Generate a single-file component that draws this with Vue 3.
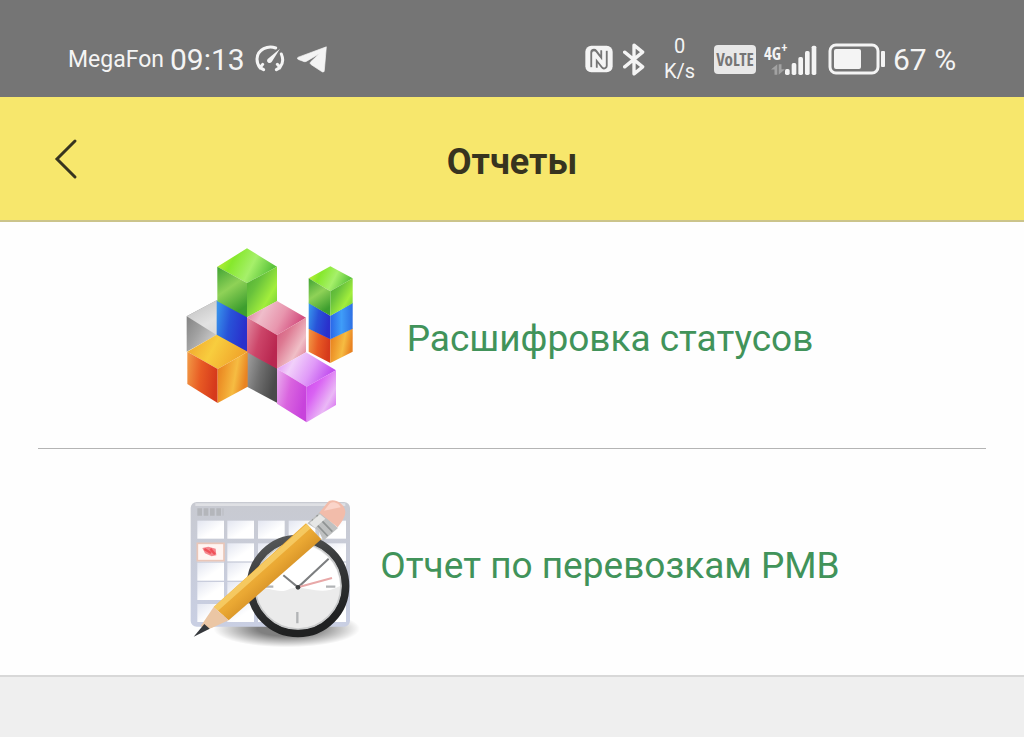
<template>
  <div class="screen">
    <!-- Status bar -->
    <div class="status-bar">
      <div class="status-left">
        <span class="carrier">MegaFon</span>
        <span class="clock">09:13</span>
        <svg class="icon-gauge" viewBox="0 0 90 84" aria-hidden="true">
          <g fill="none" stroke="#f4f4f4" stroke-width="9" stroke-linecap="round">
            <path d="M62 9C40 0 7 12 6 42c0 11 3 19 9 26l8-10" />
            <path d="M79 27c6 14 5 29-4 40l-8-9" />
            <path d="M19 70l7 4M71 70l-7 4" />
          </g>
          <path d="M75 11L38 42c-6 8 5 17 12 9z" fill="#f4f4f4" />
        </svg>
        <svg class="icon-plane" viewBox="0 0 90 80" aria-hidden="true">
          <path d="M88 2L82 72c0 6-4 7-8 4L42 55c-4-3-3-6 0-9l25-23-38 22c-4 2-7 2-11 0L4 40c-4-2-4-5 0-7z" fill="#f4f4f4" stroke="#f4f4f4" stroke-linejoin="round" stroke-width="2" />
        </svg>
      </div>
      <div class="status-right">
        <svg class="icon-nfc" viewBox="0 0 90 84" aria-hidden="true">
          <rect x="1" y="2" width="82" height="80" rx="18" fill="#f4f4f4" />
          <g fill="none" stroke-linejoin="round">
            <path d="M27 68V22l30 40V16" stroke="#757575" stroke-width="22" />
            <path d="M27 76V24l30 38V8" stroke="#f4f4f4" stroke-width="11" />
          </g>
          <path d="M14 67h18l-4 13H14zM52 17h18V4H56z" fill="#f4f4f4" />
        </svg>
        <svg class="icon-bt" viewBox="0 0 66 98" aria-hidden="true">
          <path d="M5 27l54 44-26 21V6l26 21L5 71" fill="none" stroke="#f4f4f4" stroke-width="10" stroke-linejoin="round" stroke-linecap="round" />
        </svg>
        <div class="net-speed">
          <span>0</span>
          <span>K/s</span>
        </div>
        <span class="volte">VoLTE</span>
        <div class="signal">
          <div class="signal-type">
            <span>4G<sup>+</sup></span>
            <svg class="icon-data" viewBox="0 0 40 30" aria-hidden="true">
              <path d="M18 30h-8V15H0L18 0zM22 0h8v14h10L22 30z" fill="#a2a2a2" />
            </svg>
          </div>
          <svg class="icon-bars" viewBox="0 0 96 90" aria-hidden="true">
            <rect
              v-for="(h, i) in bars"
              :key="i"
              :x="i * 20"
              :y="90 - h"
              width="14"
              :height="h"
              rx="5"
              fill="#f4f4f4"
            />
          </svg>
        </div>
        <svg class="icon-battery" viewBox="0 0 60 32" aria-hidden="true">
          <rect x="5" y="2" width="48" height="28" rx="6" fill="none" stroke="#f4f4f4" stroke-width="3" />
          <rect x="9" y="6" width="27" height="20" rx="2" fill="#f4f4f4" />
          <rect x="56" y="8" width="4" height="16" rx="1" fill="#f4f4f4" />
        </svg>
        <span class="clock charge">67 %</span>
      </div>
    </div>

    <!-- Header -->
    <header class="header">
      <button class="back-btn" type="button" aria-label="Назад">
        <svg viewBox="0 0 24 42" aria-hidden="true">
          <path d="M21 3L3 21l18 18" fill="none" stroke="#37341f" stroke-width="3" stroke-linecap="round" />
        </svg>
      </button>
      <h1 class="title">Отчеты</h1>
    </header>

    <!-- Reports -->
    <main class="report-list">
      <a class="report" href="#statuses">
        <svg class="report-icon" viewBox="42 36 528 528" aria-hidden="true">
          <defs>
            <linearGradient v-for="g in gradients" :id="g.id" :key="g.id" :x2="g.x2" :y2="g.y2">
              <stop v-for="(c, i) in g.colors" :key="i" :offset="i / (g.colors.length - 1)" :stop-color="c" />
            </linearGradient>
          </defs>
          <polygon v-for="(face, i) in faces" :key="i" :points="face.points" :fill="'url(#' + face.fill + ')'" />
        </svg>
        <span class="report-name">Расшифровка статусов</span>
      </a>
      <a class="report" href="#rmv">
        <svg class="report-icon" viewBox="42 -18 528 528" aria-hidden="true">
          <defs>
            <linearGradient id="cell" x2="1" y2="1">
              <stop offset="0" stop-color="#e3e6f1" />
              <stop offset="0.6" stop-color="#fff" />
            </linearGradient>
            <linearGradient id="frame" x2="0" y2="1">
              <stop offset="0" stop-color="#c8cad1" />
              <stop offset="1" stop-color="#c9cfe3" />
            </linearGradient>
            <linearGradient id="wood" x2="1" y2="1">
              <stop offset="0.3" stop-color="#f4c04d" />
              <stop offset="0.5" stop-color="#eaa833" />
              <stop offset="0.7" stop-color="#c47e1c" />
            </linearGradient>
            <linearGradient id="rim" x2="0.3" y2="1">
              <stop offset="0" stop-color="#5b5d5e" />
              <stop offset="0.4" stop-color="#3a3c3d" />
              <stop offset="1" stop-color="#202122" />
            </linearGradient>
            <radialGradient id="shade">
              <stop offset="0.4" stop-color="#000" stop-opacity="0.5" />
              <stop offset="1" stop-color="#000" stop-opacity="0" />
            </radialGradient>
          </defs>
          <ellipse cx="350" cy="446" rx="220" ry="56" fill="url(#shade)" />
          <rect x="62" y="66" width="478" height="374" rx="18" fill="url(#frame)" />
          <path d="M76 74h450" stroke="#dfe0e4" stroke-width="8" />
          <path d="M82 96h78" stroke="#b4b6bb" stroke-width="22" stroke-dasharray="14 5" />
          <g fill="url(#cell)">
            <template v-for="y in [122, 190, 248, 306, 372]" :key="y">
              <rect v-for="x in [82, 172, 264, 356, 448]" :key="x" :x="x" :y="y" width="80" height="54" />
            </template>
          </g>
          <rect x="82" y="190" width="80" height="52" fill="#fff5f2" stroke="#eac6b8" stroke-width="5" />
          <path d="M97 204l18-4 22 6 2 20-14 3-20-9z" fill="#f4878d" />
          <path d="M103 207l20 12M121 206l14 17" stroke="#f05058" stroke-width="7" />
          <circle cx="384" cy="318" r="142" fill="#ebebeb" stroke="url(#rim)" stroke-width="24" />
          <circle cx="384" cy="318" r="129" fill="none" stroke="#c9cacb" stroke-width="5" />
          <path d="M258 322a126 126 0 0 1 252-4c-60 34-100-4-150 8-30 18-68-6-102-4z" fill="#fff" />
          <path d="M340 286l44 36 92-86" fill="none" stroke="#7c7e80" stroke-width="6" />
          <path d="M384 322l102-28" stroke="#e8a8a8" stroke-width="6" />
          <path d="M382 396v34M468 320h28M288 320h22" stroke="#b2b4b6" stroke-width="7" />
          <circle cx="384" cy="322" r="7" fill="#3d3f40" />
          <path d="M408 130l46 48-278 243-45-40z" fill="url(#wood)" />
          <path d="M410 132l12 13-278 247-13-11z" fill="#f7cf6a" opacity="0.8" />
          <path d="M131 381l45 40-46 21-27 10-10-15z" fill="#ebc6a4" />
          <path d="M103 432l16 14-48 24z" fill="#35383c" />
          <path d="M412 130l38-34 54 48-44 38-14-30z" fill="#bfc1c1" />
          <path d="M426 119l47 49M440 106l47 49" stroke="#8f9393" stroke-width="5" />
          <path d="M419 129l31-26 16 13-31 28z" fill="#e6e7e6" />
          <path d="M448 98l24-30c14-18 54 2 54 28 0 12-9 28-23 46z" fill="#f2bcaa" />
          <path d="M462 92l18-22c12-8 28 2 32 12z" fill="#fad4c9" />
        </svg>
        <span class="report-name">Отчет по перевозкам РМВ</span>
      </a>
    </main>
  </div>
</template>

<script setup>
const bars = [18, 36, 54, 72, 88]

const gradients = [
  { id: 'green-top', x2: 1, y2: 0.3, colors: ['#d4f23a', '#86e82c', '#a6f06a', '#5cc43c'] },
  { id: 'green-left', x2: 0.4, y2: 1, colors: ['#3fa233', '#8fd257', '#3d9e2e'] },
  { id: 'green-right', x2: 1, y2: 1, colors: ['#4ca933', '#68c23c', '#a2ee3c', '#62c234'] },
  { id: 'blue-left', x2: 1, y2: 0.3, colors: ['#3a9bee', '#2853d8', '#2a30cc'] },
  { id: 'blue-right', x2: 1, y2: 0, colors: ['#2a66e8', '#3f9df8', '#2e70e4'] },
  { id: 'silver-top', x2: 1, y2: 1, colors: ['#bcbcbc', '#e2e2e2', '#d2d2d2'] },
  { id: 'silver-left', x2: 1, y2: 1, colors: ['#747474', '#a2a2a2', '#dddddd'] },
  { id: 'dark', x2: 1, y2: 0.4, colors: ['#a2a2a2', '#707070', '#4a4a4a'] },
  { id: 'pink-top', x2: 1, y2: 0.3, colors: ['#d66a90', '#efbdca', '#e896ae', '#d34f80'] },
  { id: 'pink-left', x2: 1, y2: 0.5, colors: ['#e28ba0', '#cc4569', '#b92750'] },
  { id: 'pink-right', x2: 1, y2: 1, colors: ['#d04f78', '#dd7992', '#f0bfc7', '#d96587'] },
  { id: 'orange-top', x2: 1, y2: 0.3, colors: ['#efa02b', '#f8cd3e', '#f0a52b'] },
  { id: 'orange-left', x2: 1, y2: 0.2, colors: ['#f29b46', '#e85b24', '#d63a1c'] },
  { id: 'orange-right', x2: 1, y2: 0.3, colors: ['#e57a1c', '#ef9a2c', '#f6bc42', '#e98322'] },
  { id: 'violet-top', x2: 1, y2: 0.3, colors: ['#dc7cf0', '#f1d0fa', '#e09af8', '#c250ef'] },
  { id: 'violet-left', x2: 1, y2: 0.4, colors: ['#ebb0ef', '#d964df', '#c843dc'] },
  { id: 'violet-right', x2: 1, y2: 1, colors: ['#c944ea', '#d962f3', '#eab8f6', '#ce4bed'] }
]

// isometric cubes, back to front
const faces = [
  { points: '50,244 140,196 140,300 50,350', fill: 'silver-left' },
  { points: '50,244 140,196 231,244 140,300', fill: 'silver-top' },
  { points: '140,196 231,244 231,352 140,302', fill: 'blue-left' },
  { points: '231,350 321,398 321,503 231,455', fill: 'dark' },
  { points: '142,95 231,40 321,95 231,144', fill: 'green-top' },
  { points: '142,95 231,144 231,247 142,199', fill: 'green-left' },
  { points: '231,144 321,95 321,199 231,247', fill: 'green-right' },
  { points: '231,247 321,198 408,248 321,300', fill: 'pink-top' },
  { points: '231,247 321,300 321,401 231,352', fill: 'pink-left' },
  { points: '321,300 408,248 408,352 321,401', fill: 'pink-right' },
  { points: '52,350 140,299 233,350 143,402', fill: 'orange-top' },
  { points: '52,350 143,402 143,504 52,447', fill: 'orange-left' },
  { points: '143,402 233,350 233,455 143,504', fill: 'orange-right' },
  { points: '321,401 408,352 498,406 410,455', fill: 'violet-top' },
  { points: '321,401 410,455 410,562 321,506', fill: 'violet-left' },
  { points: '410,455 498,406 498,510 410,562', fill: 'violet-right' },
  { points: '416,280 481,312 481,384 416,350', fill: 'orange-left' },
  { points: '481,312 548,280 548,350 481,384', fill: 'orange-right' },
  { points: '416,203 481,242 481,313 416,281', fill: 'blue-left' },
  { points: '481,242 548,203 548,281 481,313', fill: 'blue-right' },
  { points: '416,130 481,94 548,130 481,169', fill: 'green-top' },
  { points: '416,130 481,169 481,242 416,205', fill: 'green-left' },
  { points: '481,169 548,130 548,205 481,242', fill: 'green-right' }
]
</script>

<style>
body {
  margin: 0;
  background: #efefef;
}
</style>

<style scoped>
.screen {
  font-family: Roboto, 'Liberation Sans', sans-serif;
}

/* ==== Status bar ==== */
.status-bar {
  display: flex;
  justify-content: space-between;
  box-sizing: border-box;
  height: 97px;
  padding: 20px 64px 0 68px;
  background: #757575;
  color: #f4f4f4;
}
.status-left,
.status-right {
  display: flex;
  align-items: center;
  height: 78px;
  gap: 8px;
  white-space: nowrap;
}
.status-left {
  gap: 6px;
}
.carrier {
  font-size: 23px;
}
.clock {
  font-size: 30px;
}
.charge {
  min-width: 67px;
}
.icon-gauge {
  width: 30px;
  height: 28px;
  margin-left: 4px;
}
.icon-plane {
  width: 30px;
  height: 27px;
  margin-left: 6px;
}
.icon-nfc {
  width: 30px;
  height: 28px;
}
.icon-bt {
  width: 22px;
  height: 33px;
}
.net-speed {
  display: flex;
  flex-direction: column;
  align-items: center;
  width: 53px;
  font-size: 20px;
  line-height: 25px;
}
.volte {
  width: 42px;
  border-radius: 4px;
  background: #e8e8e8;
  color: #757575;
  font-family: 'Liberation Sans Narrow', 'Open Sans Condensed', Roboto, sans-serif;
  font-size: 17px;
  font-weight: 700;
  line-height: 29px;
  text-align: center;
}
.signal {
  display: flex;
  align-items: flex-end;
  width: 53px;
}
.signal-type {
  display: flex;
  flex-direction: column;
  align-items: flex-end;
  width: 21px;
  font-family: 'Liberation Sans Narrow', 'Open Sans Condensed', Roboto, sans-serif;
  font-size: 17px;
  font-weight: 700;
  line-height: 20px;
}
.signal-type sup {
  font-size: 15px;
  line-height: 0;
}
.signal-type span {
  width: 21px;
}
.icon-data {
  width: 14px;
  height: 11px;
}
.icon-bars {
  width: 32px;
  height: 30px;
}
.icon-battery {
  width: 60px;
  height: 32px;
}

/* ==== Header ==== */
.header {
  display: grid;
  grid-template-columns: 24px 1fr 24px;
  align-items: center;
  box-sizing: border-box;
  height: 125px;
  padding: 0 54px;
  border-bottom: 2px solid #cbc48b;
  background: #f7e76c;
}
.back-btn {
  width: 24px;
  height: 42px;
  padding: 0;
  border: none;
  background: none;
  cursor: pointer;
}
.back-btn svg {
  display: block;
  width: 24px;
  height: 42px;
}
.title {
  margin: 0;
  padding-top: 6px;
  color: #37341f;
  font-size: 36px;
  font-weight: 700;
  line-height: 48px;
  text-align: center;
}

/* ==== Reports ==== */
.report-list {
  padding: 0 38px;
  border-bottom: 2px solid #d8d8d8;
  background: #fefefe;
}
.report {
  display: flex;
  align-items: center;
  justify-content: center;
  gap: 20px;
  padding: 25px 0;
  color: #41935a;
  text-decoration: none;
}
.report + .report {
  border-top: 1px solid #b4b4b4;
}
.report-icon {
  flex: none;
  width: 176px;
  height: 176px;
}
.report-name {
  width: 460px;
  padding-top: 8px;
  font-size: 37px;
  line-height: 48px;
  text-align: center;
  white-space: nowrap;
}
</style>
